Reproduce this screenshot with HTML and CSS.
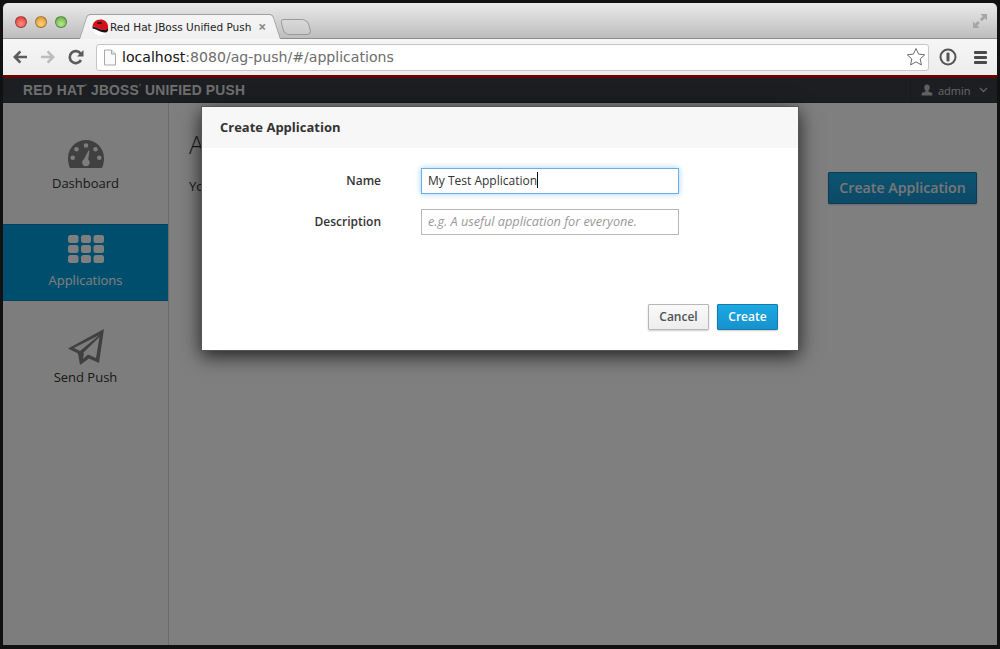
FILE: index.html
```html
<!DOCTYPE html>
<html lang="en">
<head>
  <meta charset="UTF-8">
  <meta name="viewport" content="width=device-width, initial-scale=1.0">
  <title>Red Hat JBoss Unified Push</title>
  <link rel="stylesheet" href="styles.css">
</head>
<body>
  <div class="window">
    <div class="tabstrip">
      <div class="lights">
        <span class="light red"></span>
        <span class="light amber"></span>
        <span class="light green"></span>
      </div>
      <div class="tab">
        <svg class="favicon" width="17" height="17" viewBox="0 0 17 17">
          <circle cx="8.500" cy="8.500" r="8" fill="#fff"/>
          <path d="M.5 8.500C.5 3.500 3.500.5 8.500.5c4 0 7 2.500 7.500 6.500.3 2.500.3 4-1 5-3-.5-9-2-13-4.500z" fill="#d3121a"/>
          <path d="M.6 7.800c1.500-.5 3 .5 5 1.500 3 1.400 6 2 8 1.700 1.200-.2 2-.8 2.400-1.700.4 2-.3 4-2.200 4.200-2.500.3-6-.8-8.800-2.500C3.500 10.200 1.500 9.400.7 9.800z" fill="#151515"/>
          <path d="M5.500 3.500c1.500-1 3-.5 4.500 0l-.5 1.500C8 4.500 6.500 4.500 5 5z" fill="#151515"/>
        </svg>
        <span class="tab-title">Red Hat JBoss Unified Push</span>
        <span class="tab-close">×</span>
      </div>
      <div class="newtab"></div>
      <svg class="fullscreen" width="16" height="16" viewBox="0 0 16 16">
        <path d="M8.500 1H15v6.500L12.800 5.300 9.800 8.300 7.800 6.300l3-3z" fill="#a5a5a5"/>
        <path d="M7.500 15H1V8.500l2.200 2.200 2.600-2.600 2 2-2.600 2.600z" fill="#a5a5a5"/>
      </svg>
    </div>

    <div class="toolbar">
      <svg class="nav-icon" width="18" height="18" viewBox="0 0 18 18">
        <path d="M8.500 2.500 2 9l6.500 6.500 1.800-1.800L7 10.300h9V7.700H7l3.300-3.400z" fill="#5c5c5c"/>
      </svg>
      <svg class="nav-icon" width="18" height="18" viewBox="0 0 18 18">
        <path d="M9.500 2.500 16 9l-6.500 6.500-1.800-1.800 3.300-3.400H2V7.700h9L7.700 4.300z" fill="#bcbcbc"/>
      </svg>
      <svg class="nav-icon" width="18" height="18" viewBox="0 0 18 18">
        <path d="M14 12a6 6 0 1 1-.3-6.300" fill="none" stroke="#5c5c5c" stroke-width="2.600"/>
        <path d="M16.500 2v6.500H10z" fill="#5c5c5c"/>
      </svg>
      <div class="omnibox">
        <svg class="page-icon" width="14" height="17" viewBox="0 0 14 17">
          <path d="M1.500 1h7l4 4v11h-11z" fill="#fafafa" stroke="#a8a8a8"/>
          <path d="M8.500 1v4h4" fill="#e4e4e4" stroke="#a8a8a8"/>
        </svg>
        <span class="url"><b class="host">localhost</b>:8080/ag-push/#/applications</span>
        <svg class="star" width="20" height="20" viewBox="0 0 20 20">
          <path d="M10 1.500l2.600 5.600 6.100.7-4.500 4.100 1.200 6-5.400-3-5.400 3 1.200-6L1.300 7.800l6.100-.7z" fill="#fff" stroke="#6e6e6e"/>
        </svg>
      </div>
      <svg class="ext-icon" width="18" height="18" viewBox="0 0 18 18">
        <circle cx="9" cy="9" r="7.500" fill="#f2f2f2" stroke="#555" stroke-width="2"/>
        <rect x="7.500" y="4.500" width="3" height="9" rx="1" fill="#555"/>
      </svg>
      <div class="menu-icon"><span></span><span></span><span></span></div>
    </div>

    <div class="page">
      <header class="app-header">
        <div class="brand">RED HAT<sup>'</sup> JBOSS<sup>'</sup> UNIFIED PUSH</div>
        <div class="user">
          <svg width="12" height="12" viewBox="0 0 12 12">
            <path d="M6 .5c1.800 0 2.700 1.300 2.700 3 0 1.200-.5 2.300-1.200 3v1.200c1.800.4 3.800 1 3.800 2.100V11.500H.700V9.800c0-1.100 2-1.700 3.800-2.100V6.500c-.7-.7-1.200-1.800-1.200-3 0-1.700.9-3 2.700-3z" fill="#c0c0c0"/>
          </svg>
          <span>admin</span>
          <svg width="9" height="6" viewBox="0 0 9 6">
            <path d="M1 1l3.500 3.500L8 1" fill="none" stroke="#c0c0c0" stroke-width="1.300"/>
          </svg>
        </div>
      </header>

      <div class="app-body">
        <nav class="sidebar">
          <a class="nav-item dashboard">
            <svg width="36" height="28" viewBox="0 0 36 28">
              <path fill-rule="evenodd" fill="#808080" d="M18 0C8 0 0 8 0 18c0 3.500.6 7 2 10h32c1.400-3 2-6.500 2-10C36 8 28 0 18 0zM18 3.200a2.300 2.300 0 1 1 0 4.600 2.300 2.300 0 0 1 0-4.600zM8.500 7a2.300 2.300 0 1 1 0 4.600 2.300 2.300 0 0 1 0-4.600zM27.500 7a2.300 2.300 0 1 1 0 4.600 2.300 2.300 0 0 1 0-4.600zM4.700 15.500a2.300 2.300 0 1 1 0 4.600 2.300 2.300 0 0 1 0-4.600zM31.300 15.500a2.300 2.300 0 1 1 0 4.600 2.300 2.300 0 0 1 0-4.600zM20.500 10.500l1 .3-1.300 8.700a3.800 3.800 0 1 1-4.300-.2z"/>
            </svg>
            <span>Dashboard</span>
          </a>
          <a class="nav-item active">
            <svg width="36" height="28" viewBox="0 0 36 28">
              <rect x="0" y="0" width="10.500" height="8" rx="2.500"/><rect x="13" y="0" width="10" height="8" rx="2.500"/><rect x="25.500" y="0" width="10.500" height="8" rx="2.500"/>
              <rect x="0" y="10" width="10.500" height="8" rx="2.500"/><rect x="13" y="10" width="10" height="8" rx="2.500"/><rect x="25.500" y="10" width="10.500" height="8" rx="2.500"/>
              <rect x="0" y="20" width="10.500" height="8" rx="2.500"/><rect x="13" y="20" width="10" height="8" rx="2.500"/><rect x="25.500" y="20" width="10.500" height="8" rx="2.500"/>
            </svg>
            <span>Applications</span>
          </a>
          <a class="nav-item push">
            <svg width="36" height="36" viewBox="0 0 36 36">
              <path fill-rule="evenodd" fill="#808080" d="M36 0 31 34 21 29.500 12 36 10 24.500 0 19.500zM31.500 6 6 19l6 3zM31.500 8 15 24l1 .5-1 5.500 5-4.500 8 3.500z"/>
            </svg>
            <span>Send Push</span>
          </a>
        </nav>
        <main class="content">
          <div class="content-head">
            <div>
              <h1>Applications</h1>
              <p>You don't have any applications yet.</p>
            </div>
            <button class="btn-primary btn-large">Create Application</button>
          </div>
        </main>
      </div>

      <div class="backdrop">
        <div class="modal">
          <div class="modal-header">Create Application</div>
          <form class="modal-body">
            <div class="field">
              <label>Name</label>
              <div class="input focused">My Test Application<span class="caret"></span></div>
            </div>
            <div class="field">
              <label for="description">Description</label>
              <input class="input" id="description" type="text" placeholder="e.g. A useful application for everyone.">
            </div>
          </form>
          <div class="modal-footer">
            <button class="btn-default">Cancel</button>
            <button class="btn-primary">Create</button>
          </div>
        </div>
      </div>
    </div>
  </div>
</body>
</html>
```

FILE: styles.css
```css
* {
  box-sizing: border-box;
}
html, body {
  height: 100%;
}
body {
  margin: 0;
  padding: 3px 3px 4px;
  background-color: #111;
  font-family: "Open Sans", sans-serif;
  overflow: hidden;
}
.window {
  height: 100%;
  display: flex;
  flex-direction: column;
  border-radius: 5px 5px 0 0;
  overflow: hidden;
}

/* browser chrome */
.tabstrip {
  height: 36px;
  flex: none;
  display: flex;
  align-items: flex-end;
  background: linear-gradient(#eaeaea, #bdbdbd);
  border-bottom: 1px solid #8c8c8c;
}
.lights {
  align-self: flex-start;
  display: flex;
  gap: 8px;
  padding: 13px 0 0 12px;
  width: 87px;
}
.light {
  width: 12px;
  height: 12px;
  border-radius: 50%;
  border: 1px solid rgba(0, 0, 0, 0.3);
}
.red { background: radial-gradient(circle at 50% 70%, #ff8b85, #d8352d); }
.amber { background: radial-gradient(circle at 50% 70%, #ffd27f, #d98d1f); }
.green { background: radial-gradient(circle at 50% 70%, #b8ea8d, #58a83c); }
.tab {
  position: relative;
  width: 180px;
  height: 25px;
  margin-bottom: -1px;
  display: flex;
  align-items: center;
  padding-left: 2px;
  background: linear-gradient(#f5f5f5, #efefef);
  border-top: 1px solid #a0a0a0;
  z-index: 1;
}
.tab::before, .tab::after {
  content: "";
  position: absolute;
  top: -1px;
  bottom: 0;
  width: 14px;
  background: linear-gradient(#f5f5f5, #efefef);
  border-top: 1px solid #a0a0a0;
  z-index: -1;
}
.tab::before {
  left: -7px;
  transform: skewX(-18deg);
  border-left: 1px solid #a0a0a0;
  border-radius: 4px 0 0 0;
}
.tab::after {
  right: -7px;
  transform: skewX(18deg);
  border-right: 1px solid #a0a0a0;
  border-radius: 0 4px 0 0;
}
.favicon {
  flex: none;
}
.tab-title {
  font-family: "DejaVu Sans", sans-serif;
  font-size: 10.5px;
  color: #222;
  white-space: nowrap;
  margin-left: 1px;
}
.tab-close {
  margin-left: 7px;
  font-size: 14px;
  line-height: 14px;
  color: #8a8a8a;
  font-weight: 700;
}
.newtab {
  width: 28px;
  height: 16px;
  margin: 0 0 3px 12px;
  border: 1px solid #9a9a9a;
  border-radius: 4px 6px 5px 5px;
  transform: skewX(15deg);
  background: linear-gradient(#d8d8d8, #cacaca);
}
.fullscreen {
  margin-left: auto;
  align-self: flex-start;
  margin-top: 10px;
  margin-right: 9px;
}
.toolbar {
  height: 36px;
  flex: none;
  display: flex;
  align-items: center;
  gap: 10px;
  padding: 0 10px 0 8px;
  background: linear-gradient(#f6f6f6, #ececec);
}
.omnibox {
  flex: 1;
  height: 27px;
  margin: 0 -1px 0 1px;
  display: flex;
  align-items: center;
  padding: 0 2px 0 6px;
  background-color: #fff;
  border: 1px solid #c6c6c6;
  border-radius: 3px;
}
.page-icon {
  flex: none;
}
.url {
  margin-left: 5px;
  font-family: "DejaVu Sans", sans-serif;
  font-size: 14.1px;
  color: #6d6d6d;
  white-space: nowrap;
}
.host {
  font-weight: 400;
  color: #111;
}
.star {
  margin-left: auto;
}
.ext-icon {
  margin-left: 1px;
}
.menu-icon {
  width: 13px;
  margin-left: 7px;
  display: flex;
  flex-direction: column;
  gap: 2px;
}
.menu-icon span {
  height: 3px;
  border-radius: 1px;
  background-color: #4a4a4a;
}

/* the app, dimmed by the modal backdrop */
.page {
  flex: 1;
  position: relative;
  display: flex;
  flex-direction: column;
  border-top: 3px solid #d60000;
  background-color: #fff;
}
.app-header {
  height: 25px;
  flex: none;
  display: flex;
  align-items: center;
  justify-content: space-between;
  padding-left: 20px;
  background-color: #383d44;
  border-bottom: 1px solid #30343a;
}
.brand {
  font-family: "Liberation Sans", sans-serif;
  font-size: 13.8px;
  font-weight: 700;
  letter-spacing: 0.22px;
  color: #ddd;
  white-space: nowrap;
}
.brand sup {
  font-size: 8px;
  line-height: 0;
}
.user {
  height: 100%;
  width: 87px;
  display: flex;
  align-items: center;
  gap: 5px;
  padding-left: 10px;
  border-left: 1px solid #2c3036;
  font-size: 11px;
  color: #d0d0d0;
}
.user span {
  margin-right: 3px;
}
.app-body {
  flex: 1;
  display: flex;
}
.sidebar {
  width: 166px;
  flex: none;
  background-color: #fafafa;
  border-right: 1px solid #d6d6d6;
}
.nav-item {
  display: flex;
  flex-direction: column;
  align-items: center;
  font-size: 13px;
  color: #333;
}
.nav-item span {
  line-height: 17px;
}
.dashboard {
  height: 121px;
  padding-top: 37px;
  gap: 7px;
}
.nav-item.active {
  height: 77px;
  padding-top: 10px;
  gap: 9px;
  background-color: #009ddc;
  border-top: 1px solid #0087bd;
  border-bottom: 1px solid #0087bd;
  color: #fff;
}
.nav-item.active rect {
  fill: #fff;
}
.push {
  padding-top: 28px;
  gap: 4px;
}
.content {
  flex: 1;
  padding: 25px 20px 0;
}
.content-head {
  display: flex;
  justify-content: space-between;
  align-items: flex-start;
}
h1 {
  margin: 0;
  font-size: 25px;
  font-weight: 300;
  line-height: 32px;
  color: #333;
}
.content p {
  margin: 17px 0 0;
  font-size: 13px;
  color: #333;
}
.btn-primary, .btn-default {
  font-family: "Open Sans", sans-serif;
  font-weight: 600;
  font-size: 12px;
  height: 26px;
  padding: 0 0 2px;
  border-radius: 1px;
  cursor: pointer;
}
.btn-primary {
  width: 61px;
  color: #fff;
  background: linear-gradient(#1ba8e0, #1792cf);
  border: 1px solid #1679ab;
  box-shadow: 0 1px 2px rgba(0, 0, 0, 0.2);
}
.btn-large {
  width: 149px;
  height: 32px;
  margin-top: 44px;
  font-size: 14.2px;
  color: #eee;
}
.btn-default {
  width: 61px;
  color: #4d5258;
  background: linear-gradient(#fafafa, #ededed);
  border: 1px solid #b7b7b7;
  box-shadow: 0 1px 2px rgba(0, 0, 0, 0.2);
}
/* sits over the red stripe too, hence the -3px */
.backdrop {
  position: absolute;
  inset: -3px 0 0;
  display: flex;
  justify-content: center;
  align-items: flex-start;
  padding-top: 31px;
  background-color: rgba(0, 0, 0, 0.5);
}
.modal {
  width: 598px;
  height: 245px;
  display: flex;
  flex-direction: column;
  background-color: #fff;
  border: 1px solid #555;
  box-shadow: 0 5px 18px rgba(0, 0, 0, 0.75);
}
.modal-header {
  height: 41px;
  flex: none;
  display: flex;
  align-items: center;
  padding: 0 0 2px 18px;
  background-color: #f7f7f7;
  font-size: 13px;
  font-weight: 700;
  color: #333;
}
.modal-body {
  flex: 1;
  padding-top: 20px;
  display: flex;
  flex-direction: column;
  gap: 15px;
}
.field {
  display: flex;
  align-items: center;
}
.field label {
  width: 179px;
  margin-right: 40px;
  padding-bottom: 2px;
  text-align: right;
  font-size: 12px;
  font-weight: 600;
  color: #333;
}
.input {
  width: 258px;
  height: 26px;
  padding: 0 6px 2px;
  display: flex;
  align-items: center;
  border: 1px solid #b7b7b7;
  border-radius: 0;
  font-family: "Open Sans", sans-serif;
  font-size: 12px;
  color: #333;
  background-color: #fff;
  outline: none;
}
.input::placeholder {
  color: #999;
  font-size: 12.7px;
  font-style: italic;
  opacity: 1;
}
.input.focused {
  border-color: #66afe9;
  box-shadow: 0 0 6px rgba(102, 175, 233, 0.6);
  white-space: nowrap;
}
.caret {
  width: 1px;
  height: 16px;
  background-color: #111;
}
.modal-footer {
  display: flex;
  justify-content: flex-end;
  gap: 8px;
  padding: 0 20px 20px 0;
}
```
